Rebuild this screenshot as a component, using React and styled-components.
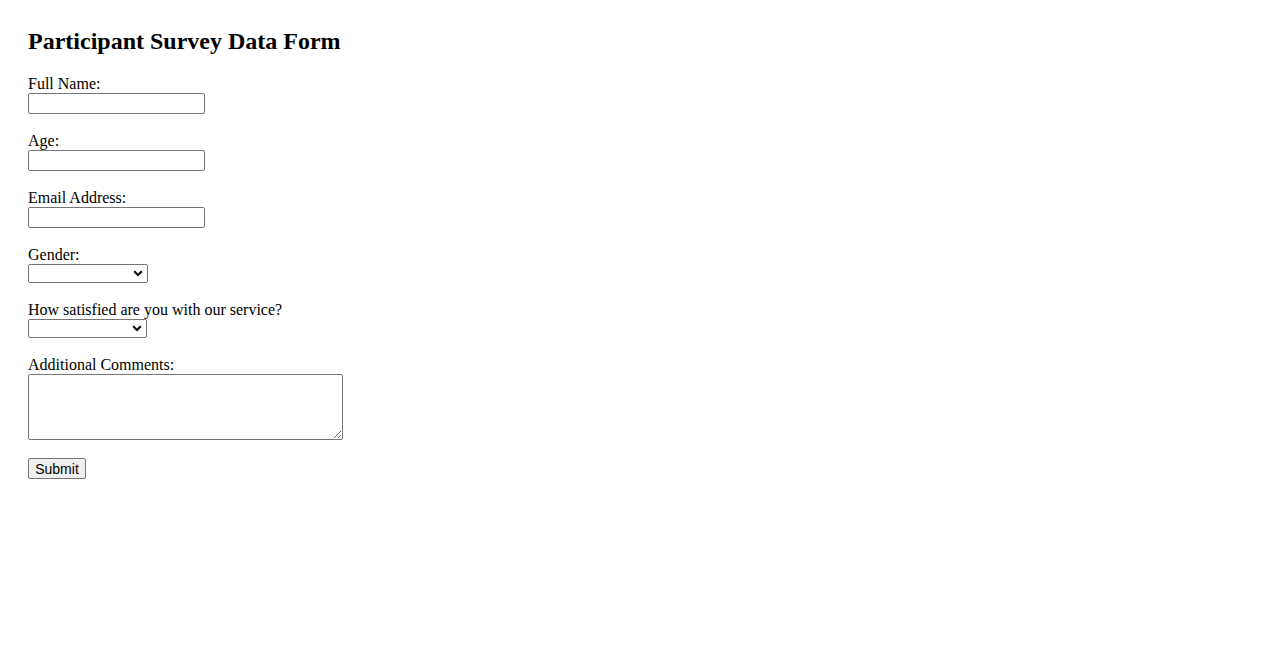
import React from 'react';
import styled, { createGlobalStyle } from 'styled-components';

const GlobalStyle = createGlobalStyle`
  body {
    margin: 8px;
    background: #fff;
    color: #000;
    font-family: "Liberation Serif", "Times New Roman", serif;
    font-size: 16px;
  }
`;

const Page = styled.div`
  padding: 20px;
`;

const Title = styled.h2`
  margin: 0 0 20px;
  font-size: 24px;
  line-height: 27px;
  font-weight: bold;
`;

const Form = styled.form`
  display: flex;
  flex-direction: column;
  align-items: flex-start;
`;

const Field = styled.div`
  display: flex;
  flex-direction: column;
  align-items: flex-start;
  margin-bottom: 18px;
`;

const Label = styled.label`
  display: block;
  line-height: 18px;
`;

const TextInput = styled.input`
  box-sizing: border-box;
  width: 177px;
  height: 21px;
  margin: 0;
  padding: 1px 2px;
  border: 1px solid #767676;
  border-radius: 2px;
  background: #fff;
  font-family: "Liberation Sans", Arial, sans-serif;
  font-size: 13.33px;
`;

const Select = styled.select`
  box-sizing: border-box;
  width: ${(props) => props.$width}px;
  height: 19px;
  margin: 0;
  padding: 0 18px 0 2px;
  border: 1px solid #767676;
  border-radius: 2px;
  background-color: #fff;
  background-image: url("data:image/svg+xml,%3Csvg xmlns='http://www.w3.org/2000/svg' width='10' height='7' viewBox='0 0 10 7'%3E%3Cpath d='M1.2 1.2 L5 5 L8.8 1.2' fill='none' stroke='%23000' stroke-width='2'/%3E%3C/svg%3E");
  background-repeat: no-repeat;
  background-position: right 4px center;
  appearance: none;
  -webkit-appearance: none;
  font-family: "Liberation Sans", Arial, sans-serif;
  font-size: 13.33px;
`;

const TextArea = styled.textarea`
  box-sizing: border-box;
  width: 315px;
  height: 66px;
  margin: 0;
  padding: 2px;
  border: 1px solid #767676;
  border-radius: 2px;
  background: #fff;
  font-family: "Liberation Mono", monospace;
  font-size: 13.33px;
`;

const SubmitButton = styled.button`
  box-sizing: border-box;
  width: 58px;
  height: 21px;
  margin: 0;
  padding: 1px 6px;
  border: 1px solid #767676;
  border-radius: 2px;
  background: #efefef;
  color: #000;
  font-family: "Liberation Sans", Arial, sans-serif;
  font-size: 14px;
  text-align: center;
`;

export default function App() {
  return (
    <>
      <GlobalStyle />
      <Page>
        <Title>Participant Survey Data Form</Title>
        <Form onSubmit={(e) => e.preventDefault()}>
          <Field>
            <Label htmlFor="fullName">Full Name:</Label>
            <TextInput id="fullName" type="text" />
          </Field>
          <Field>
            <Label htmlFor="age">Age:</Label>
            <TextInput id="age" type="text" />
          </Field>
          <Field>
            <Label htmlFor="email">Email Address:</Label>
            <TextInput id="email" type="text" />
          </Field>
          <Field>
            <Label htmlFor="gender">Gender:</Label>
            <Select id="gender" $width={120} defaultValue="">
              <option value="" />
              <option value="male">Male</option>
              <option value="female">Female</option>
              <option value="other">Other</option>
            </Select>
          </Field>
          <Field>
            <Label htmlFor="satisfaction">How satisfied are you with our service?</Label>
            <Select id="satisfaction" $width={119} defaultValue="">
              <option value="" />
              <option value="very">Very satisfied</option>
              <option value="neutral">Neutral</option>
              <option value="not">Not satisfied</option>
            </Select>
          </Field>
          <Field>
            <Label htmlFor="comments">Additional Comments:</Label>
            <TextArea id="comments" />
          </Field>
          <SubmitButton type="submit">Submit</SubmitButton>
        </Form>
      </Page>
    </>
  );
}
